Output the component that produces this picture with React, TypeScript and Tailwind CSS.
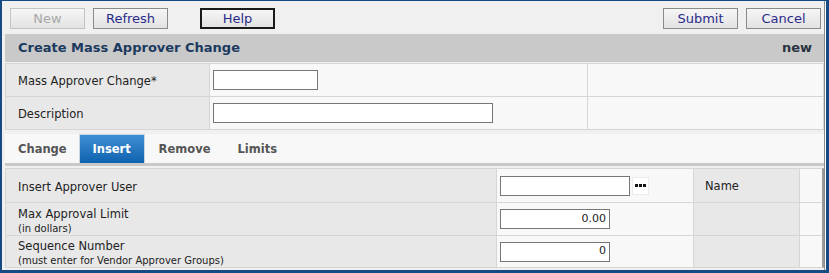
import React from "react"

const font = "font-['DejaVu_Sans','Liberation_Sans',sans-serif]"

function Btn({ label, disabled, strong }: { label: string; disabled?: boolean; strong?: boolean }) {
    return (
        <button
            className={
                "w-[75px] h-[21px] text-[13px] leading-none bg-gradient-to-b from-[#f6f6f6] to-[#e2e2e2] " +
                (strong ? "border-2 border-[#1a1a1a] " : "border border-[#8a8a8a] ") +
                (disabled ? "text-[#a8a8a8] border-[#c4c4c4]" : "text-[#2b2b8a]")
            }
        >
            {label}
        </button>
    )
}

function TextBox({ w, value }: { w: string; value?: string }) {
    return (
        <div className={`${w} h-[20px] bg-white border border-[#767676] text-[11px] text-[#222] flex items-center justify-end pr-[3px]`}>
            {value}
        </div>
    )
}

function Label({ main, sub }: { main: string; sub?: string }) {
    return (
        <div className="pl-[12px] pt-[3px] flex flex-col justify-center text-[#222]">
            <span className="text-[11.5px] leading-[15px]">{main}</span>
            {sub && <span className="text-[10px] leading-[13px]">{sub}</span>}
        </div>
    )
}

export default function App() {
    return (
        <div className={`w-[829px] h-[273px] bg-white border-[#154b82] border-l-2 border-t border-r-[3px] border-b-[3px] ${font}`}>
            <div className="h-full w-[823px] bg-[#f0f0f0] border-r border-[#8c8c8c] flex flex-col">
                {/* Toolbar */}
                <div className="h-[33px] flex items-center pl-[8px] pr-[3px] pt-[1px]">
                    <div className="flex gap-[8px]">
                        <Btn label="New" disabled />
                        <Btn label="Refresh" />
                    </div>
                    <div className="ml-[32px]">
                        <Btn label="Help" strong />
                    </div>
                    <div className="ml-auto flex gap-[8px]">
                        <Btn label="Submit" />
                        <Btn label="Cancel" />
                    </div>
                </div>

                <div className="ml-[3px] flex flex-col">
                    {/* Header */}
                    <div className="h-[28px] bg-[#c8c9c8] flex items-center justify-between pl-[13px] pr-[12px] text-[13px] font-bold text-[#1c3a5f]">
                        <span>Create Mass Approver Change</span>
                        <span className="text-[#2a3340]">new</span>
                    </div>

                    {/* Form table */}
                    <div className="mt-[1px] border border-[#d6d6d6] bg-[#f8f8f8]">
                        <div className="h-[33px] grid grid-cols-[204px_378px_1fr] border-b border-[#d6d6d6]">
                            <div className="bg-[#e8e8e8] border-r border-[#d6d6d6] flex">
                                <Label main="Mass Approver Change*" />
                            </div>
                            <div className="border-r border-[#d6d6d6] flex items-center pl-[3px]">
                                <TextBox w="w-[105px]" />
                            </div>
                            <div />
                        </div>
                        <div className="h-[32px] grid grid-cols-[204px_378px_1fr]">
                            <div className="bg-[#e8e8e8] border-r border-[#d6d6d6] flex">
                                <Label main="Description" />
                            </div>
                            <div className="border-r border-[#d6d6d6] flex items-center pl-[3px]">
                                <TextBox w="w-[280px]" />
                            </div>
                            <div />
                        </div>
                    </div>

                    {/* Tabs */}
                    <div className="mt-[4px] h-[29px] bg-[#f8f8f8] flex items-stretch text-[11.5px] font-bold text-[#555]">
                        <div className="pl-[13px] pr-[12px] flex items-center pt-[2px]">Change</div>
                        <div className="w-[66px] flex items-center justify-center pt-[2px] text-white bg-gradient-to-b from-[#3f8fd4] to-[#0b62ae] border border-b-0 border-[#c9d6e2]">
                            Insert
                        </div>
                        <div className="px-[14px] flex items-center pt-[2px]">Remove</div>
                        <div className="px-[13px] flex items-center pt-[2px]">Limits</div>
                    </div>
                    <div className="h-[3px] bg-[#c8c8c8]" />

                    {/* Lower table */}
                    <div className="mt-[2px] w-[819px] border-t border-l border-b border-[#d6d6d6] border-r-2 border-r-[#9a9a9a]">
                        <div className="h-[34px] grid grid-cols-[491px_197px_106px_1fr] border-b border-[#d6d6d6]">
                            <div className="bg-[#e8e8e8] border-r border-[#d6d6d6] flex">
                                <Label main="Insert Approver User" />
                            </div>
                            <div className="bg-[#f8f8f8] border-r border-[#d6d6d6] flex items-center pl-[3px] gap-[2px]">
                                <TextBox w="w-[130px]" />
                                <div className="w-[17px] h-[18px] bg-white border border-[#ececec] flex items-center justify-center gap-[1px]">
                                    <span className="w-[3px] h-[3px] bg-[#111]" />
                                    <span className="w-[3px] h-[3px] bg-[#111]" />
                                    <span className="w-[3px] h-[3px] bg-[#111]" />
                                </div>
                            </div>
                            <div className="bg-[#e8e8e8] border-r border-[#d6d6d6] flex items-center pl-[11px] pt-[2px] text-[11.5px] text-[#222]">
                                Name
                            </div>
                            <div className="bg-[#f8f8f8]" />
                        </div>
                        <div className="h-[33px] grid grid-cols-[491px_197px_106px_1fr] border-b border-[#d6d6d6]">
                            <div className="bg-[#e8e8e8] border-r border-[#d6d6d6] flex">
                                <Label main="Max Approval Limit" sub="(in dollars)" />
                            </div>
                            <div className="bg-[#f8f8f8] border-r border-[#d6d6d6] flex items-center pl-[3px]">
                                <TextBox w="w-[110px]" value="0.00" />
                            </div>
                            <div className="bg-[#e8e8e8] border-r border-[#d6d6d6]" />
                            <div className="bg-[#f8f8f8]" />
                        </div>
                        <div className="h-[31px] grid grid-cols-[491px_197px_106px_1fr]">
                            <div className="bg-[#e8e8e8] border-r border-[#d6d6d6] flex">
                                <Label main="Sequence Number" sub="(must enter for Vendor Approver Groups)" />
                            </div>
                            <div className="bg-[#f8f8f8] border-r border-[#d6d6d6] flex items-center pl-[3px]">
                                <TextBox w="w-[110px]" value="0" />
                            </div>
                            <div className="bg-[#e8e8e8] border-r border-[#d6d6d6]" />
                            <div className="bg-[#f8f8f8]" />
                        </div>
                    </div>
                </div>
            </div>
        </div>
    )
}
